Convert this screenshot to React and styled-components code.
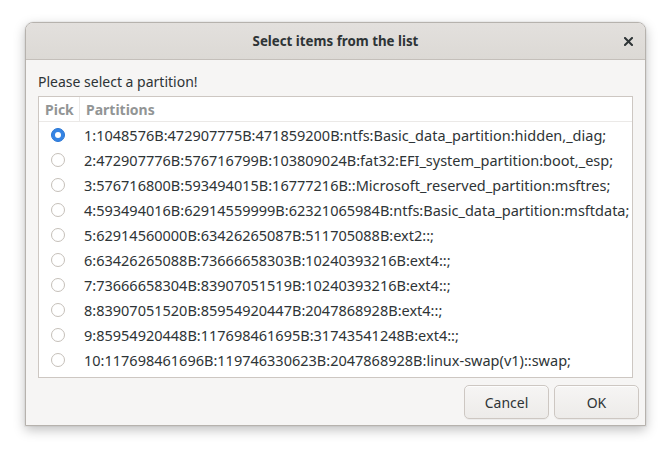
import React from "react";
import styled, { createGlobalStyle } from "styled-components";

const Global = createGlobalStyle`
  html, body { margin: 0; padding: 0; background: #ffffff; }
  body { font-family: "Noto Sans", "Open Sans", sans-serif; color: #2e3436; }
`;

const Page = styled.div`
  width: 672px;
  height: 455px;
  box-sizing: border-box;
  padding: 22px 0 0 25px;
`;

const Dialog = styled.div`
  width: 621px;
  height: 404px;
  box-sizing: border-box;
  border: 1px solid #b6b2ad;
  border-radius: 8px 8px 0 0;
  background: #f6f5f4;
  box-shadow: 0 4px 12px rgba(0, 0, 0, 0.25), 0 0 0 1px rgba(0,0,0,0.03);
  display: flex;
  flex-direction: column;
  overflow: hidden;
`;

const TitleBar = styled.div`
  height: 37px;
  box-sizing: border-box;
  flex: none;
  background: linear-gradient(#e3e0dd, #dcd9d5);
  border-bottom: 1px solid #c4bfba;
  display: flex;
  align-items: center;
  justify-content: center;
  position: relative;
`;

const Title = styled.div`
  font-weight: 700;
  font-size: 13.3px;
  color: #2e3436;
`;

const CloseButton = styled.div`
  position: absolute;
  right: 12px;
  top: 13px;
  width: 10px;
  height: 10px;
  display: flex;
  align-items: center;
  justify-content: center;
`;

const Body = styled.div`
  flex: 1;
  display: flex;
  flex-direction: column;
  padding: 12px 12px 6px 12px;
`;

const Label = styled.div`
  font-size: 14px;
  color: #2e3436;
  height: 24px;
  line-height: 19px;
`;

const List = styled.div`
  border: 1px solid #cdc7c2;
  background: #ffffff;
  height: 282px;
  box-sizing: border-box;
  display: flex;
  flex-direction: column;
`;

const HeaderRow = styled.div`
  display: flex;
  height: 25px;
  box-sizing: border-box;
  border-bottom: 1px solid #ebe9e7;
  flex: none;
`;

const HeaderCell = styled.div`
  width: ${(p) => p.$width || "auto"};
  flex: ${(p) => (p.$width ? "none" : "1")};
  box-sizing: border-box;
  padding-left: 6px;
  font-size: 14px;
  font-weight: 700;
  color: #929595;
  display: flex;
  align-items: center;
  border-right: ${(p) => (p.$divider ? "1px solid #ebe9e7" : "none")};
`;

const Row = styled.div`
  display: flex;
  height: 25px;
  align-items: center;
  flex: none;
`;

const PickCell = styled.div`
  width: 41px;
  flex: none;
  box-sizing: border-box;
  display: flex;
  justify-content: flex-start;
  padding-left: 12px;
`;

const Radio = styled.div`
  width: 14px;
  height: 14px;
  border-radius: 50%;
  box-sizing: border-box;
  display: flex;
  align-items: center;
  justify-content: center;
  background: ${(p) => (p.$checked ? "#3584e4" : "#ffffff")};
  border: 1px solid ${(p) => (p.$checked ? "#2a76d4" : "#c5bfb9")};
  &::after {
    content: "";
    display: ${(p) => (p.$checked ? "block" : "none")};
    width: 6px;
    height: 6px;
    border-radius: 50%;
    background: #ffffff;
  }
`;

const RowText = styled.div`
  padding-left: 4px;
  font-size: 14.5px;
  color: #2e3436;
  white-space: nowrap;
`;

const Buttons = styled.div`
  margin-top: auto;
  display: flex;
  justify-content: flex-end;
  gap: 5px;
  margin-right: -6px;
`;

const Button = styled.div`
  width: 85px;
  height: 34px;
  box-sizing: border-box;
  border: 1px solid #cdc7c2;
  border-radius: 5px;
  background: linear-gradient(#f6f5f4, #edebe9);
  box-shadow: inset 0 1px rgba(255,255,255,0.8), 0 1px rgba(0,0,0,0.04);
  display: flex;
  align-items: center;
  justify-content: center;
  font-size: 14px;
  color: #2e3436;
`;

const partitions = [
  "1:1048576B:472907775B:471859200B:ntfs:Basic_data_partition:hidden,_diag;",
  "2:472907776B:576716799B:103809024B:fat32:EFI_system_partition:boot,_esp;",
  "3:576716800B:593494015B:16777216B::Microsoft_reserved_partition:msftres;",
  "4:593494016B:62914559999B:62321065984B:ntfs:Basic_data_partition:msftdata;",
  "5:62914560000B:63426265087B:511705088B:ext2::;",
  "6:63426265088B:73666658303B:10240393216B:ext4::;",
  "7:73666658304B:83907051519B:10240393216B:ext4::;",
  "8:83907051520B:85954920447B:2047868928B:ext4::;",
  "9:85954920448B:117698461695B:31743541248B:ext4::;",
  "10:117698461696B:119746330623B:2047868928B:linux-swap(v1)::swap;",
];

export default function App() {
  return (
    <Page>
      <Global />
      <Dialog>
        <TitleBar>
          <Title>Select items from the list</Title>
          <CloseButton>
            <svg width="9" height="9" viewBox="0 0 9 9">
              <path d="M1 1L8 8M8 1L1 8" stroke="#2e3436" strokeWidth="2" strokeLinecap="square" />
            </svg>
          </CloseButton>
        </TitleBar>
        <Body>
          <Label>Please select a partition!</Label>
          <List>
            <HeaderRow>
              <HeaderCell $width="41px" $divider>Pick</HeaderCell>
              <HeaderCell>Partitions</HeaderCell>
            </HeaderRow>
            {partitions.map((p, i) => (
              <Row key={i}>
                <PickCell>
                  <Radio $checked={i === 0} />
                </PickCell>
                <RowText>{p}</RowText>
              </Row>
            ))}
          </List>
          <Buttons>
            <Button>Cancel</Button>
            <Button>OK</Button>
          </Buttons>
        </Body>
      </Dialog>
    </Page>
  );
}
